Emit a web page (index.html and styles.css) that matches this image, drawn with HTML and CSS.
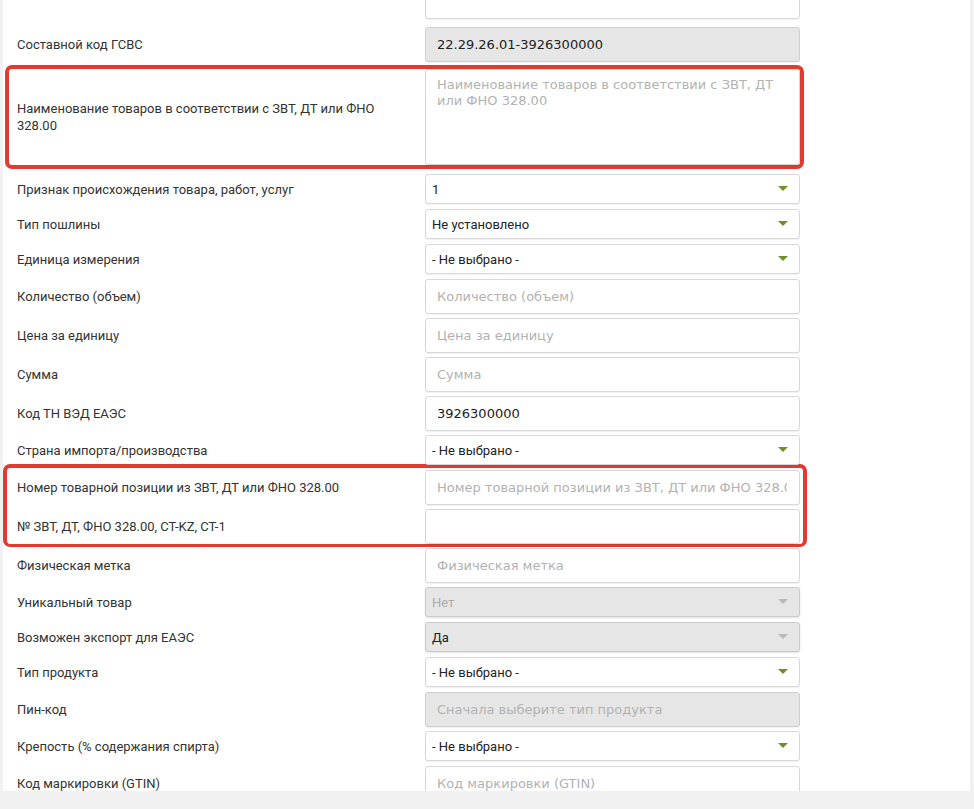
FILE: index.html
```html
<!DOCTYPE html>
<html lang="ru">
<head>
<meta charset="UTF-8" />
<meta name="viewport" content="width=device-width, initial-scale=1" />
<title>Товар</title>
<link rel="stylesheet" href="styles.css">
</head>
<body>

<div class="page">
  <div class="form">

    <div class="row row-first">
      <span class="label"></span>
      <input class="field" type="text">
    </div>

    <div class="row">
      <label class="label">Составной код ГСВС</label>
      <input class="field locked" type="text" value="22.29.26.01-3926300000" readonly>
    </div>

    <!-- выделено рамкой -->
    <div class="row mark mark-area">
      <label class="label">Наименование товаров в соответствии с ЗВТ, ДТ или ФНО 328.00</label>
      <textarea class="field area" placeholder="Наименование товаров в соответствии с ЗВТ, ДТ или ФНО 328.00"></textarea>
    </div>

    <div class="row row-pick">
      <label class="label">Признак происхождения товара, работ, услуг</label>
      <div class="pick"><select class="choice"><option>1</option></select></div>
    </div>

    <div class="row row-pick">
      <label class="label">Тип пошлины</label>
      <div class="pick"><select class="choice"><option>Не установлено</option></select></div>
    </div>

    <div class="row row-pick">
      <label class="label">Единица измерения</label>
      <div class="pick"><select class="choice"><option>- Не выбрано -</option></select></div>
    </div>

    <div class="row">
      <label class="label">Количество (объем)</label>
      <input class="field" type="text" placeholder="Количество (объем)">
    </div>

    <div class="row">
      <label class="label">Цена за единицу</label>
      <input class="field" type="text" placeholder="Цена за единицу">
    </div>

    <div class="row">
      <label class="label">Сумма</label>
      <input class="field" type="text" placeholder="Сумма">
    </div>

    <div class="row">
      <label class="label">Код ТН ВЭД ЕАЭС</label>
      <input class="field" type="text" value="3926300000">
    </div>

    <div class="row row-pick">
      <label class="label">Страна импорта/производства</label>
      <div class="pick"><select class="choice"><option>- Не выбрано -</option></select></div>
    </div>

    <!-- выделено рамкой -->
    <div class="mark mark-group">
      <div class="row">
        <label class="label">Номер товарной позиции из ЗВТ, ДТ или ФНО 328.00</label>
        <input class="field" type="text" placeholder="Номер товарной позиции из ЗВТ, ДТ или ФНО 328.00">
      </div>
      <div class="row">
        <label class="label">№ ЗВТ, ДТ, ФНО 328.00, CT-KZ, CT-1</label>
        <input class="field" type="text">
      </div>
    </div>

    <div class="row">
      <label class="label">Физическая метка</label>
      <input class="field" type="text" placeholder="Физическая метка">
    </div>

    <div class="row row-pick">
      <label class="label">Уникальный товар</label>
      <div class="pick pick-off"><select class="choice choice-muted" disabled><option>Нет</option></select></div>
    </div>

    <div class="row row-pick">
      <label class="label">Возможен экспорт для ЕАЭС</label>
      <div class="pick pick-off"><select class="choice" disabled><option>Да</option></select></div>
    </div>

    <div class="row row-pick">
      <label class="label">Тип продукта</label>
      <div class="pick"><select class="choice"><option>- Не выбрано -</option></select></div>
    </div>

    <div class="row">
      <label class="label">Пин-код</label>
      <input class="field locked" type="text" placeholder="Сначала выберите тип продукта" readonly>
    </div>

    <div class="row row-pick">
      <label class="label">Крепость (% содержания спирта)</label>
      <div class="pick"><select class="choice"><option>- Не выбрано -</option></select></div>
    </div>

    <div class="row">
      <label class="label">Код маркировки (GTIN)</label>
      <input class="field" type="text" placeholder="Код маркировки (GTIN)">
    </div>

  </div>
</div>

</body>
</html>
```

FILE: styles.css
```css
body {
  margin: 0;
  background: #f1f1f1;
  font-family: Roboto, "Noto Sans", sans-serif;
}
.page {
  width: 967px;
  height: 791px;
  margin-left: 3px;
  background: #fff;
  overflow: hidden;
}
.form {
  display: flex;
  flex-direction: column;
  gap: 4px;
  width: 783px;
  margin-top: -16px;
  padding-left: 14px;
}
.row {
  display: grid;
  grid-template-columns: 408px 375px;
  align-items: center;
}
.row-first {
  margin-bottom: 4px;
}
.row-pick {
  margin-bottom: 1px;
}
.label {
  padding-right: 14px;
  font-size: 13px;
  line-height: 17px;
  color: #333;
}

/* поля ввода */
input.field,
textarea.field {
  box-sizing: border-box;
  width: 375px;
  height: 35px;
  margin: 0;
  padding: 0 12px 0 11px;
  border: 1px solid #d8d8d8;
  border-radius: 3px;
  background: #fff;
  box-shadow: 0 1px 1px rgba(0, 0, 0, 0.06);
  font-family: "DejaVu Sans", Verdana, sans-serif;
  font-size: 13px;
  color: #222;
  outline: none;
}
.field::placeholder {
  color: #b2b2b2;
}
input.locked {
  background: #e6e6e6;
  border-color: #cfcfcf;
}
textarea.area {
  display: block;
  height: 96px;
  padding: 7px 12px 5px 11px;
  line-height: 16px;
  resize: none;
}

/* списки */
.pick {
  position: relative;
}
.pick::after {
  content: "";
  position: absolute;
  top: 12px;
  right: 12px;
  border-left: 5px solid transparent;
  border-right: 5px solid transparent;
  border-top: 5px solid #6f8e2c;
  pointer-events: none;
}
.choice {
  box-sizing: border-box;
  display: block;
  width: 375px;
  height: 30px;
  margin: 0;
  padding: 0 28px 0 6px;
  border: 1px solid #d8d8d8;
  border-radius: 3px;
  background: #fff;
  box-shadow: 0 1px 1px rgba(0, 0, 0, 0.06);
  appearance: none;
  -webkit-appearance: none;
  font-family: Roboto, "Noto Sans", sans-serif;
  font-size: 13px;
  color: #222;
  opacity: 1;
}
.pick-off .choice {
  background: #e6e6e6;
  border-color: #cbcbcb;
  box-shadow: 0 1px 2px rgba(0, 0, 0, 0.12);
}
.pick-off::after {
  border-top-color: #b8b8b8;
}
.choice-muted {
  color: #ababab;
}
.choice:disabled {
  opacity: 1;
}
.pick-off .choice:not(.choice-muted) {
  color: #222;
}

/* красные рамки */
.mark {
  border: 4px solid #e23a2f;
  border-radius: 7px;
}
.mark-area {
  margin: -1px -4px 1px -12px;
  padding-left: 8px;
}
.mark-group {
  display: flex;
  flex-direction: column;
  gap: 4px;
  margin: -6px -7px -3px -14px;
  padding: 2px 3px 0 10px;
  border-bottom-width: 3px;
}
```
